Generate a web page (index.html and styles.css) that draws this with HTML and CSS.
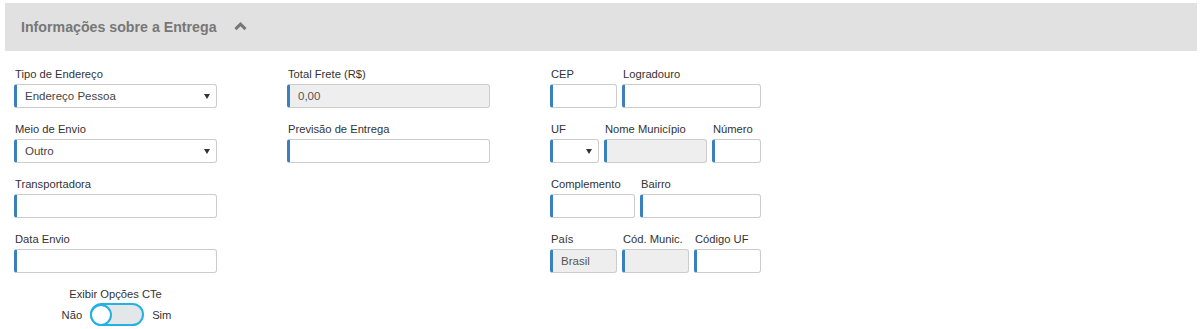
FILE: index.html
```html
<!DOCTYPE html>
<html lang="pt-BR">
  <head>
    <meta charset="UTF-8" />
    <title>Informações sobre a Entrega</title>
    <link rel="stylesheet" href="styles.css">
  </head>
  <body>
    <div class="panel">
      <div class="panelHeading">
        <span class="panelTitle">Informações sobre a Entrega</span>
        <svg class="chevron" viewBox="0 0 14 10" width="13" height="10">
          <path d="M1.6 8.4L7 3L12.4 8.4" fill="none" stroke="#777" stroke-width="3.2" />
        </svg>
      </div>

      <div class="panelBody">
        <div class="col col1">
          <div class="formGroup">
            <label>Tipo de Endereço</label>
            <div class="selectBox"><span class="field">Endereço Pessoa</span></div>
          </div>
          <div class="formGroup">
            <label>Meio de Envio</label>
            <div class="selectBox"><span class="field">Outro</span></div>
          </div>
          <div class="formGroup">
            <label>Transportadora</label>
            <input class="field" type="text" />
          </div>
          <div class="formGroup">
            <label>Data Envio</label>
            <input class="field" type="text" />
          </div>
          <div class="switchGroup">
            <div class="switchLabel">Exibir Opções CTe</div>
            <div class="switchRow">
              <span>Não</span>
              <span class="switch"><span class="knob"></span></span>
              <span>Sim</span>
            </div>
          </div>
        </div>

        <div class="col col2">
          <div class="formGroup">
            <label>Total Frete (R$)</label>
            <input class="field disabled" type="text" value="0,00" readonly />
          </div>
          <div class="formGroup">
            <label>Previsão de Entrega</label>
            <input class="field" type="text" />
          </div>
        </div>

        <div class="col col3">
          <div class="inlineRow">
            <div class="formGroup w67">
              <label>CEP</label>
              <input class="field" type="text" />
            </div>
            <div class="formGroup w139">
              <label>Logradouro</label>
              <input class="field" type="text" />
            </div>
          </div>
          <div class="inlineRow">
            <div class="formGroup w49">
              <label>UF</label>
              <div class="selectBox"><span class="field"></span></div>
            </div>
            <div class="formGroup w103">
              <label>Nome Município</label>
              <input class="field disabled" type="text" readonly />
            </div>
            <div class="formGroup w49">
              <label>Número</label>
              <input class="field" type="text" />
            </div>
          </div>
          <div class="inlineRow">
            <div class="formGroup w85">
              <label>Complemento</label>
              <input class="field" type="text" />
            </div>
            <div class="formGroup w121">
              <label>Bairro</label>
              <input class="field" type="text" />
            </div>
          </div>
          <div class="inlineRow">
            <div class="formGroup w67">
              <label>País</label>
              <input class="field disabled" type="text" value="Brasil" readonly />
            </div>
            <div class="formGroup w67">
              <label>Cód. Munic.</label>
              <input class="field disabled" type="text" readonly />
            </div>
            <div class="formGroup w67">
              <label>Código UF</label>
              <input class="field" type="text" />
            </div>
          </div>
        </div>
      </div>
    </div>
  </body>
</html>
```

FILE: styles.css
```css
body {
  margin: 0;
  background: #fff;
  font-family: "Liberation Sans", Arial, sans-serif;
  font-size: 11.2px;
  color: #333;
}

.panel {
  padding: 3px 3px 0 5px;
}

.panelHeading {
  display: flex;
  align-items: center;
  gap: 17px;
  height: 48px;
  padding-left: 16px;
  background: #e1e1e1;
}
.panelTitle {
  font-size: 14.2px;
  font-weight: bold;
  color: #777;
}
.chevron {
  margin-top: -2px;
}

.panelBody {
  display: grid;
  grid-template-columns: 273px 263px 211px;
  padding: 16px 0 0 9px;
}

.formGroup {
  display: flex;
  flex-direction: column;
  margin-bottom: 14px;
}
.formGroup label {
  line-height: 14px;
  margin-bottom: 3px;
  padding-left: 1px;
  padding-top: 1px;
  margin-top: -1px;
  white-space: nowrap;
}

.field {
  box-sizing: border-box;
  display: block;
  width: 100%;
  height: 24px;
  margin: 0;
  padding: 0 8px;
  border: 1px solid #ccc;
  border-left: 3px solid #3a80bf;
  border-radius: 3px;
  background: #fff;
  font-family: inherit;
  font-size: 11.5px;
  line-height: 22px;
  color: #444;
  outline: none;
}
.field.disabled {
  background: #eee;
  color: #555;
}

.selectBox {
  position: relative;
}
.selectBox::after {
  content: "";
  position: absolute;
  right: 7px;
  top: 10px;
  border-left: 3px solid transparent;
  border-right: 3px solid transparent;
  border-top: 5px solid #333;
}

.col1 .formGroup,
.col2 .formGroup {
  width: 203px;
}

.inlineRow {
  display: flex;
  gap: 5px;
}
.w49 { width: 49px; }
.w67 { width: 67px; }
.w85 { width: 85px; }
.w103 { width: 103px; }
.w121 { width: 121px; }
.w139 { width: 139px; }

.switchGroup {
  width: 203px;
  display: flex;
  flex-direction: column;
  align-items: center;
  margin-top: 4px;
}
.switchLabel {
  line-height: 14px;
  margin-bottom: 2px;
}
.switchRow {
  display: flex;
  align-items: center;
  gap: 8px;
  margin-left: 2px;
}
.switch {
  box-sizing: border-box;
  display: flex;
  width: 54px;
  height: 23px;
  border: 2px solid #25b1e3;
  border-radius: 12px;
  background: #e3e7ea;
}
.knob {
  box-sizing: border-box;
  width: 22px;
  height: 22px;
  margin: -1.5px 0 0 -2px;
  border: 2px solid #25b1e3;
  border-radius: 50%;
  background: #fff;
}
```
